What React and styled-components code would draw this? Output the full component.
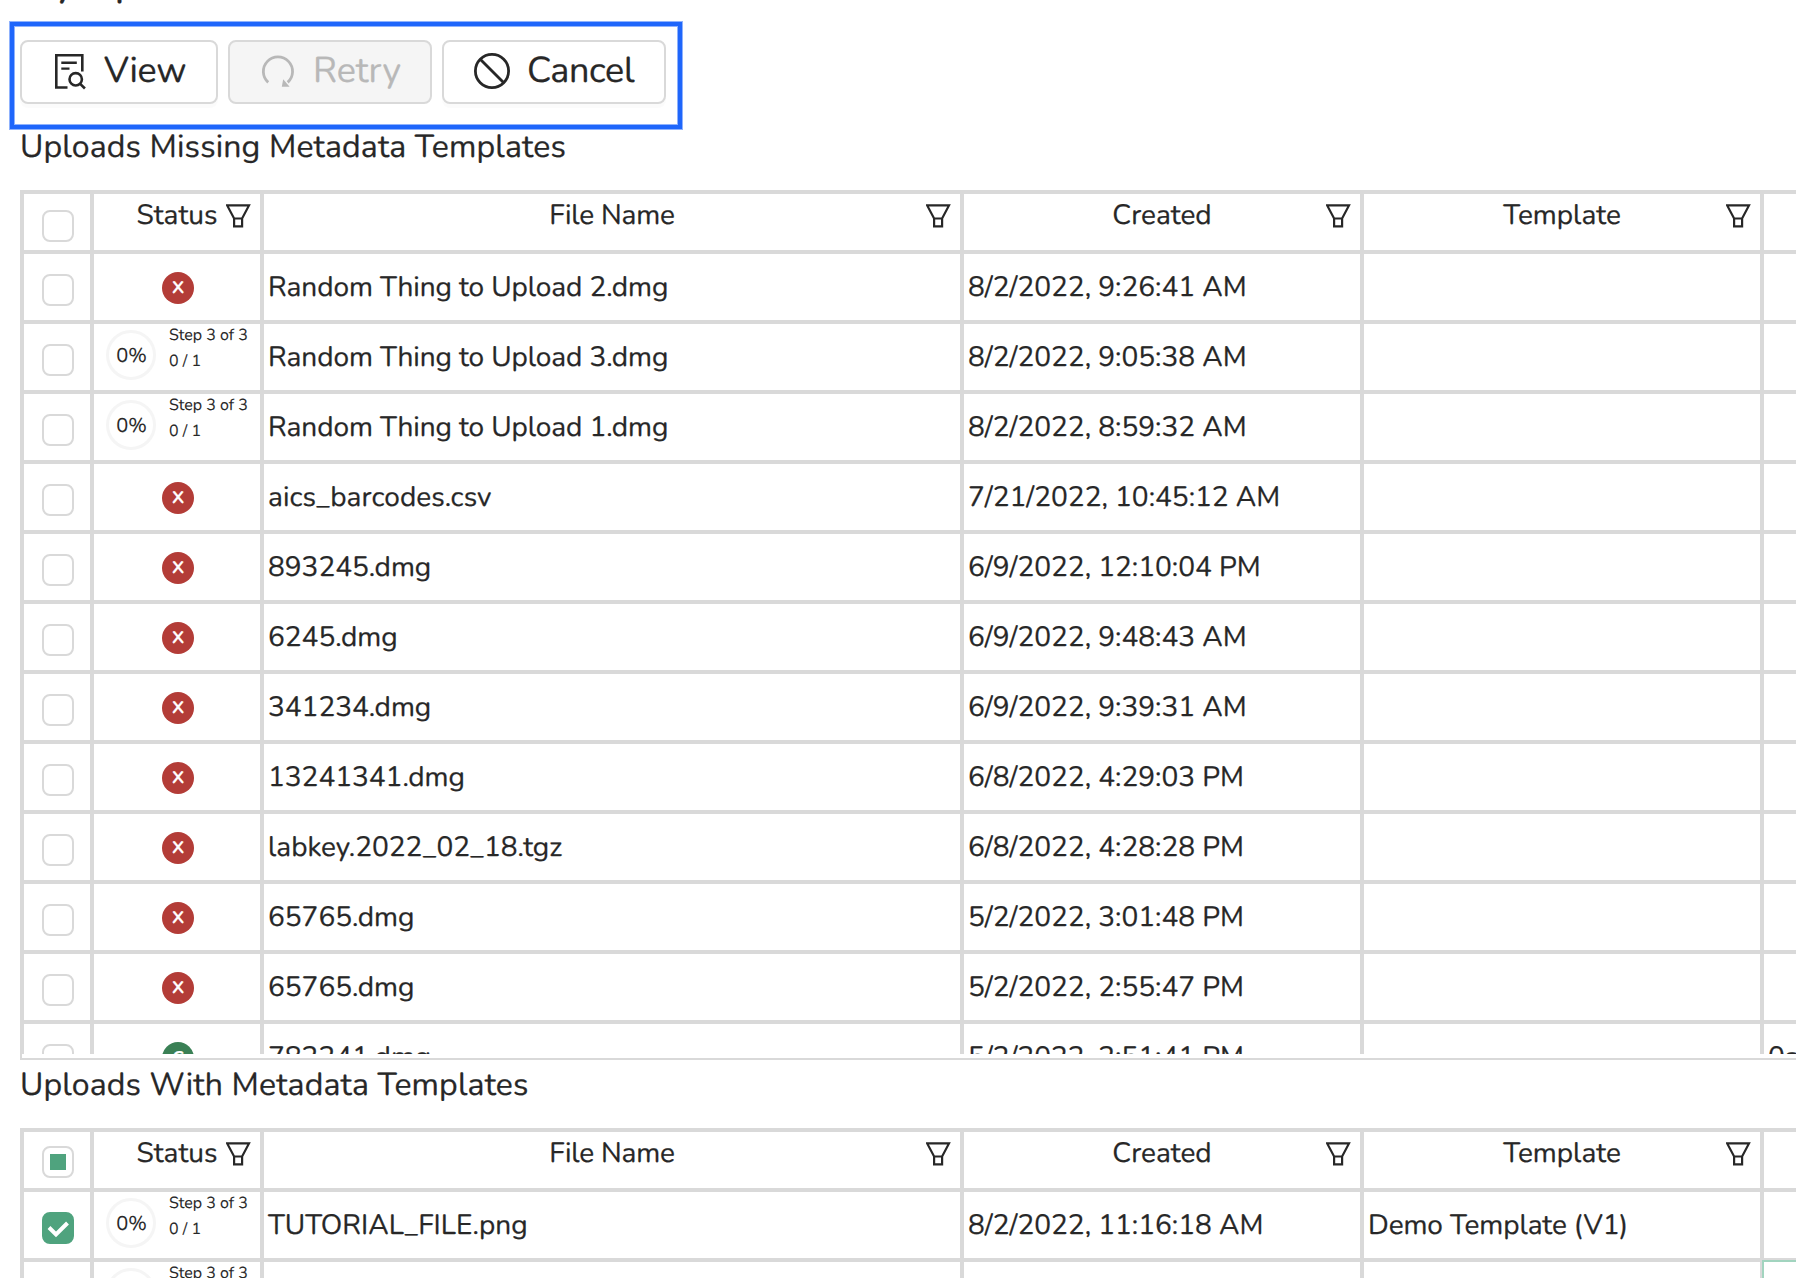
import React from 'react';
import styled, { createGlobalStyle } from 'styled-components';

const Global = createGlobalStyle`
  *, *::before, *::after { box-sizing: border-box; }
  html, body { margin: 0; height: 1278px; overflow: hidden; background: #fff; }
  body {
    font-family: Nunito, Lato, "Noto Sans", sans-serif;
    font-size: 28px;
    color: #272727;
    text-rendering: geometricPrecision;
    -webkit-text-stroke: 0.25px;
  }
`;

const Page = styled.main`
  position: relative;
  width: 1796px;
  height: 1278px;
  overflow: hidden;
`;

const Title = styled.h1`
  margin: -40px 0 0 20px;
  height: 48px;
  font-size: 40px;
  line-height: 48px;
  font-weight: 500;
`;

const Toolbar = styled.div`
  display: flex;
  gap: 10px;
  padding: 32px 20px 0;
`;

const Highlight = styled.div`
  position: absolute;
  left: 10px;
  top: 22px;
  width: 672px;
  height: 107px;
  border: 4px solid #1f66fb;
  box-shadow: 0 0 0 1px rgba(31, 102, 251, 0.5), inset 0 0 0 1px rgba(31, 102, 251, 0.5);
  pointer-events: none;
`;

const Button = styled.button`
  display: flex;
  align-items: center;
  width: ${(p) => p.$width}px;
  height: 64px;
  padding: 0 0 3px 29px;
  border: 2px solid #d9d9d9;
  border-radius: 8px;
  background: ${(p) => (p.disabled ? '#f5f5f5' : '#fff')};
  color: ${(p) => (p.disabled ? '#b8b8b8' : '#272727')};
  box-shadow: ${(p) => (p.disabled ? 'none' : '0 4px 0 rgba(0, 0, 0, 0.015)')};
  font: inherit;
  font-size: 36px;
  line-height: 44px;
  letter-spacing: ${(p) => p.$tracking || 0}px;
  text-rendering: inherit;
  gap: 17px;
`;

const SectionTitle = styled.h2`
  margin: ${(p) => p.$top}px 0 0 20px;
  height: 43px;
  font-size: 32px;
  line-height: 44px;
  font-weight: 400;
  letter-spacing: 0.15px;
`;

const Table = styled.div`
  width: 1980px;
  height: ${(p) => p.$height}px;
  margin: ${(p) => p.$top}px 0 0 20px;
  border: 2px solid #d9d9d9;
`;

const Body = styled.div`
  height: ${(p) => p.$height}px;
  overflow: hidden;
`;

const Row = styled.div`
  display: grid;
  grid-template-columns: 70px 170px 700px 400px 400px 240px;
  height: ${(p) => (p.$head ? 60 : 70)}px;
`;

const Cell = styled.div`
  display: flex;
  align-items: center;
  min-width: 0;
  padding: 0 4px;
  border: 2px solid ${(p) => (p.$focused ? '#a2d4bf' : '#d9d9d9')};
  line-height: 40px;
  letter-spacing: ${(p) => p.$tracking || 0}px;
  white-space: pre;
`;

const CheckCell = styled(Cell)`
  padding: ${(p) => p.$pad || 6}px 0 0 1px;
  justify-content: center;
`;

const StatusCell = styled(Cell)`
  padding: 0 0 0 2px;
  justify-content: center;
`;

const HeadCell = styled(Cell)`
  align-items: flex-start;
  padding: 0 9px;
`;

const HeadLabel = styled.div`
  flex: 1;
  padding: 1px 0 0 25px;
  text-align: center;
`;

const Box = styled.span`
  display: flex;
  align-items: center;
  justify-content: center;
  width: 32px;
  height: 32px;
  border: 2px solid ${(p) => (p.$checked ? '#4fa37e' : '#d9d9d9')};
  border-radius: 8px;
  background: ${(p) => (p.$checked ? '#4fa37e' : '#fff')};
`;

const Partial = styled.span`
  width: 16px;
  height: 16px;
  background: #4fa37e;
`;

const Dot = styled.span`
  display: flex;
  justify-content: center;
  width: 32px;
  height: 32px;
  margin-top: 2px;
  border-radius: 50%;
  background: ${(p) => (p.$ok ? '#3a8055' : '#b33c37')};
  color: #fff;
  font-size: 24px;
  font-weight: 500;
  line-height: 29px;
`;

const Progress = styled.div`
  display: flex;
  width: 100%;
  height: 100%;
  padding-left: 10px;
`;

const Ring = styled.span`
  display: flex;
  align-items: center;
  justify-content: center;
  width: 50px;
  height: 50px;
  margin: 6px 13px 0 0;
  padding: 3px 0 0 1px;
  border: 3px solid #f5f5f5;
  border-radius: 50%;
  font-size: 20px;
  -webkit-text-stroke: 0.1px;
`;

const Steps = styled.div`
  margin-top: -2px;
  font-size: 16px;
  line-height: 26px;
  -webkit-text-stroke: 0.1px;
`;

const Icon = styled.svg`
  flex: none;
  display: block;
  margin: ${(p) => p.$margin || 0};
  fill: none;
  stroke: currentColor;
`;

const ViewIcon = () => (
  <Icon width="36" height="38" viewBox="0 0 36 38" strokeWidth="2.6" $margin="0 1px 0 -1px">
    <path d="M17.5 35.5H6.3V3.2h26V19.5" />
    <path d="M11.3 10.8h15.5M11.3 16.6h8.2" strokeWidth="2.4" />
    <circle cx="25.7" cy="27.3" r="6.2" />
    <path d="M30.2 31.8l4.7 4.7" />
  </Icon>
);

const RetryIcon = () => (
  <Icon width="36" height="38" viewBox="0 0 36 38" strokeWidth="2.8" $margin="0 0 0 1px">
    <path d="M8.2 30.4A14.6 14.6 0 1 1 27.7 30.4" />
    <path d="M21.8 34.7L23.2 27.2L29.6 34.7Z" fill="currentColor" stroke="none" />
  </Icon>
);

const CancelIcon = () => (
  <Icon width="36" height="38" viewBox="0 0 36 38" strokeWidth="2.8" $margin="0 0 0 1px">
    <circle cx="18" cy="19" r="16.6" />
    <path d="M6.5 7.5L29.5 30.5" />
  </Icon>
);

const FilterIcon = () => (
  <Icon width="25" height="24" viewBox="0 0 25 24" strokeWidth="2.2" $margin="10px 0 0">
    <path d="M1.2 1.4H23L16.1 14.5H8.1ZM8.1 14.5V22.3H16.1V14.5" />
  </Icon>
);

const CheckIcon = () => (
  <Icon width="24" height="20" viewBox="0 0 24 20" strokeWidth="4" $margin="4px 0 0" color="#fff">
    <path d="M3 7.5L10 14.5L21.5 3" />
  </Icon>
);

const missing = [
  ['failed', 'Random Thing to Upload 2.dmg', '8/2/2022, 9:26:41 AM', -0.08],
  ['progress', 'Random Thing to Upload 3.dmg', '8/2/2022, 9:05:38 AM', -0.08],
  ['progress', 'Random Thing to Upload 1.dmg', '8/2/2022, 8:59:32 AM', -0.08],
  ['failed', 'aics_barcodes.csv', '7/21/2022, 10:45:12 AM', 0.1],
  ['failed', '893245.dmg', '6/9/2022, 12:10:04 PM'],
  ['failed', '6245.dmg', '6/9/2022, 9:48:43 AM'],
  ['failed', '341234.dmg', '6/9/2022, 9:39:31 AM'],
  ['failed', '13241341.dmg', '6/8/2022, 4:29:03 PM'],
  ['failed', 'labkey.2022_02_18.tgz', '6/8/2022, 4:28:28 PM'],
  ['failed', '65765.dmg', '5/2/2022, 3:01:48 PM'],
  ['failed', '65765.dmg', '5/2/2022, 2:55:47 PM'],
  ['done', '782241.dmg', '5/2/2022, 2:51:41 PM'],
];

function Status({ kind }) {
  if (kind === 'progress') {
    return (
      <Progress>
        <Ring>0%</Ring>
        <Steps>
          <div>Step 3 of 3</div>
          <div>0 / 1</div>
        </Steps>
      </Progress>
    );
  }
  return <Dot $ok={kind === 'done'}>{kind === 'done' ? 'c' : 'x'}</Dot>;
}

function Header({ partial }) {
  return (
    <Row $head>
      <CheckCell $pad={partial ? 4 : 8}><Box>{partial && <Partial />}</Box></CheckCell>
      {['Status', 'File Name', 'Created', 'Template'].map((label) => (
        <HeadCell key={label} $tracking={label === 'File Name' ? -0.2 : 0}>
          <HeadLabel>{label}</HeadLabel><FilterIcon />
        </HeadCell>
      ))}
      <HeadCell />
    </Row>
  );
}

function UploadRow({ kind, name, date, template, checked, extra, focused, tracking }) {
  return (
    <Row>
      <CheckCell><Box $checked={checked}>{checked && <CheckIcon />}</Box></CheckCell>
      <StatusCell><Status kind={kind} /></StatusCell>
      <Cell $tracking={tracking}>{name}</Cell>
      <Cell>{date}</Cell>
      <Cell $tracking={-0.1}>{template}</Cell>
      <Cell $focused={focused}>{extra}</Cell>
    </Row>
  );
}

export default function App() {
  return (
    <Page>
      <Global />
      <Title>My Uploads</Title>
      <Toolbar>
        <Button $width={198} $tracking={-0.2}><ViewIcon />View</Button>
        <Button $width={204} disabled><RetryIcon />Retry</Button>
        <Button $width={224} $tracking={-0.35}><CancelIcon />Cancel</Button>
      </Toolbar>
      <Highlight />
      <SectionTitle $top={22}>Uploads Missing Metadata Templates</SectionTitle>
      <Table $top={21} $height={870}>
        <Header />
        <Body $height={802}>
          {missing.map(([kind, name, date, tracking], i) => (
            <UploadRow key={i} kind={kind} name={name} date={date} tracking={tracking}
              extra={kind === 'done' ? '0a' : null} />
          ))}
        </Body>
      </Table>
      <SectionTitle $top={4}>Uploads With Metadata Templates</SectionTitle>
      <Table $top={21} $height={870}>
        <Header partial />
        <Body $height={802}>
          <UploadRow kind="progress" checked name="TUTORIAL_FILE.png"
            date="8/2/2022, 11:16:18 AM" template="Demo Template (V1)" />
          <UploadRow kind="progress" focused />
        </Body>
      </Table>
    </Page>
  );
}
